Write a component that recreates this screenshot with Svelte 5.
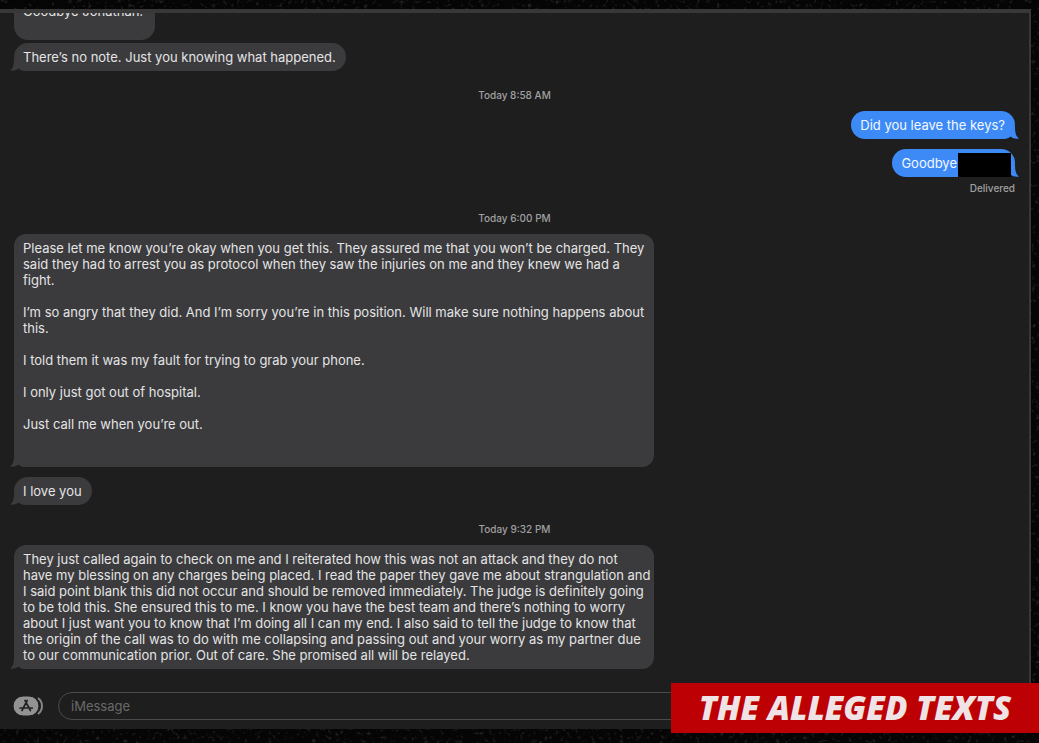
<script>
    // the whole conversation, oldest first
    const thread = [
        { kind: "in", text: "Goodbye Jonathan!", first: true },
        { kind: "in", text: "There’s no note. Just you knowing what happened.", tail: true },
        { kind: "time", day: "Today", time: "8:58 AM" },
        { kind: "out", text: "Did you leave the keys?", tail: true },
        { kind: "out", text: "Goodbye", tail: true, redacted: true },
        { kind: "status", text: "Delivered" },
        { kind: "time", day: "Today", time: "6:00 PM" },
        {
            kind: "in",
            tail: true,
            long: true,
            spaced: true,
            text: `Please let me know you’re okay when you get this. They assured me that you won’t be charged. They
said they had to arrest you as protocol when they saw the injuries on me and they knew we had a
fight.

I’m so angry that they did. And I’m sorry you’re in this position. Will make sure nothing happens about
this.

I told them it was my fault for trying to grab your phone.

I only just got out of hospital.

Just call me when you’re out.`,
        },
        { kind: "in", text: "I love you", tail: true },
        { kind: "time", day: "Today", time: "9:32 PM" },
        {
            kind: "in",
            tail: true,
            long: true,
            text: `They just called again to check on me and I reiterated how this was not an attack and they do not
have my blessing on any charges being placed. I read the paper they gave me about strangulation and
I said point blank this did not occur and should be removed immediately. The judge is definitely going
to be told this. She ensured this to me. I know you have the best team and there’s nothing to worry
about I just want you to know that I’m doing all I can my end. I also said to tell the judge to know that
the origin of the call was to do with me collapsing and passing out and your worry as my partner due
to our communication prior. Out of care. She promised all will be relayed.`,
        },
    ];

    let draft = $state("");
</script>

<div class="page">
    <!-- grainy black backdrop -->
    <svg class="grain" aria-hidden="true">
        <filter id="grain">
            <feTurbulence type="fractalNoise" baseFrequency="0.25" numOctaves="3" seed="8" />
            <feColorMatrix values="0 0 0 0 0.5  0 0 0 0 0.5  0 0 0 0 0.5  2 0 0 0 -1.15" />
        </filter>
        <rect width="100%" height="100%" filter="url(#grain)" />
    </svg>

    <main class="window">
        <div class="thread">
            {#each thread as item}
                {#if item.kind === "time"}
                    <p class="time">{item.day} {item.time}</p>
                {:else if item.kind === "status"}
                    <p class="status">{item.text}</p>
                {:else}
                    <div
                        class="bubble {item.kind}"
                        class:first={item.first}
                        class:long={item.long}
                        class:spaced={item.spaced}
                    >
                        {#if item.tail}
                            <svg class="tail" viewBox="0 0 16 12" aria-hidden="true">
                                <path d="M4 0 C4 6 3 9.500 0 11.500 C3 12 6 11.500 8.500 9.500 C10 11 12 12 16 12 L16 0 Z" />
                            </svg>
                        {/if}
                        <span class="text">{item.text}</span>
                        {#if item.redacted}
                            <span class="redaction"></span>
                        {/if}
                    </div>
                {/if}
            {/each}
        </div>

        <form class="compose" onsubmit={(e) => e.preventDefault()}>
            <button class="apps" type="button" aria-label="Apps">
                <svg viewBox="0 0 30 20" width="30" height="20">
                    <path d="M25 2 A10 10 0 0 1 25 18" fill="none" stroke="#868687" stroke-width="2" />
                    <rect x="0" y="0" width="26" height="20" rx="10" fill="#929293" stroke="#1e1e1e" stroke-width="1" />
                    <path d="M14.200 4.500 L9 14.500 M12 4.500 L17.400 14.500 M7 12 H14.300 M16.600 12 H19.300" fill="none" stroke="#232323" stroke-width="1.700" stroke-linecap="round" />
                </svg>
            </button>
            <input type="text" placeholder="iMessage" aria-label="iMessage" bind:value={draft} />
        </form>
    </main>

    <h1 class="banner">THE ALLEGED TEXTS</h1>
</div>

<style>
    :global(body) {
        margin: 0;
        background: #060505;
    }

    * {
        box-sizing: border-box;
    }

    .page {
        position: relative;
        min-height: 100vh;
        padding: 9px 8px 14px 0;
        overflow: hidden;
        font-family: Inter, "Liberation Sans", sans-serif;
        font-size: 13px;
        line-height: 16px;
        color: #e4e4e5;
    }

    .grain {
        position: absolute;
        inset: 0;
        width: 100%;
        height: 100%;
        opacity: 0.3;
    }

    .window {
        position: relative;
        overflow: hidden;
        background: #1e1e1e;
        border-top: 4px solid #383838;
        border-right: 2px solid #383838;
    }

    .thread {
        display: flex;
        flex-direction: column;
        align-items: flex-start;
        padding: 0 14px;
    }

    p {
        margin: 0;
    }

    .bubble {
        position: relative;
        display: flex;
        min-height: 28px;
        padding: 6px 10px 6px 9px;
        border-radius: 14px;
        white-space: pre;
    }

    .in {
        background: #3b3b3d;
        margin-bottom: 10px;
    }

    /* scrolled half out of view */
    .first {
        margin-top: -16px;
        margin-bottom: 3px;
        padding-right: 12px;
        padding-bottom: 21px;
    }

    .long {
        width: 640px;
        border-radius: 12px;
    }

    .spaced {
        padding-bottom: 35px;
    }

    .out {
        align-self: flex-end;
        margin-bottom: 10px;
        background: #3d8af7;
        color: #f4f8ff;
    }

    .tail {
        position: absolute;
        left: -4px;
        bottom: 0;
        width: 16px;
        height: 12px;
        fill: #3b3b3d;
    }

    .out .tail {
        left: auto;
        right: -4px;
        fill: #3d8af7;
        transform: scaleX(-1);
    }

    .text {
        position: relative;
    }

    .redaction {
        position: relative;
        width: 53px;
        height: 24px;
        margin: -2px -6px -6px 1px;
        background: #000;
    }

    .time,
    .status {
        font-size: 10px;
        font-weight: 500;
        color: #a0a0a1;
    }

    .time {
        align-self: center;
        margin: 6px 0 8px;
    }

    .status {
        align-self: flex-end;
        margin: -7px 0 8px;
    }

    .compose {
        display: flex;
        align-items: center;
        gap: 15px;
        padding: 13px 14px 9px 13px;
    }

    .apps {
        display: flex;
        padding: 0;
        border: 0;
        background: none;
    }

    input {
        flex: 1;
        height: 28px;
        padding: 0 12px;
        border: 1px solid #4a4a4b;
        border-radius: 14px;
        background: none;
        color: #e4e4e5;
        font: inherit;
        outline: none;
    }

    input::placeholder {
        color: #69696a;
        opacity: 1;
    }

    /* caption strip laid over the bottom corner */
    .banner {
        position: absolute;
        right: 0;
        bottom: 10px;
        margin: 0;
        padding: 0 28px;
        background: #bd0003;
        color: #efe3e6;
        font-family: "Open Sans", "Noto Sans", sans-serif;
        font-size: 33px;
        font-style: italic;
        font-weight: 800;
        line-height: 50px;
        white-space: nowrap;
    }
</style>
